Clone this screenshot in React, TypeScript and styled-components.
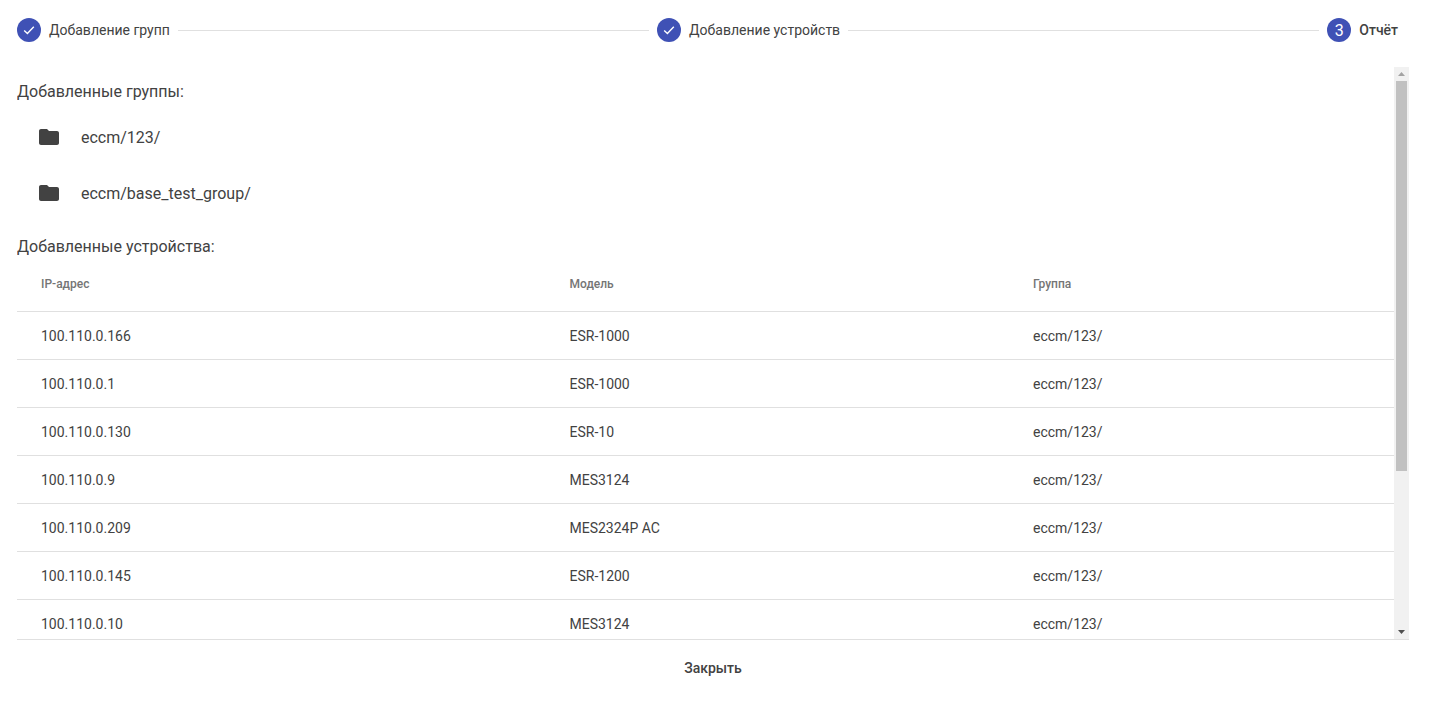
import React from "react";
import styled, { createGlobalStyle } from "styled-components";

const Global = createGlobalStyle`
  html, body { margin: 0; padding: 0; height: 100%; background: #fff; }
  body {
    font-family: Roboto, "Liberation Sans", sans-serif;
    color: #424242;
  }
`;

const Page = styled.div`
  height: 710px;
  display: flex;
  flex-direction: column;
  box-sizing: border-box;
  overflow: hidden;
`;

const Stepper = styled.div`
  display: flex;
  align-items: center;
  height: 60px;
  padding: 0 25px 0 9px;
  flex: none;
`;

const Step = styled.div`
  display: flex;
  align-items: center;
  padding: 0 8px;
  flex: none;
`;

const StepCircle = styled.div`
  width: 24px;
  height: 24px;
  border-radius: 50%;
  background: #3f51b5;
  color: #fff;
  display: flex;
  align-items: center;
  justify-content: center;
  font-size: 16px;
  font-weight: 400;
`;

const StepLabel = styled.span<{ $active?: boolean }>`
  margin-left: 8px;
  font-size: 14px;
  line-height: 20px;
  font-weight: ${(p) => (p.$active ? 500 : 400)};
  color: #424242;
`;

const Connector = styled.div`
  flex: 1;
  height: 1px;
  background: #e0e0e0;
`;

const Body = styled.div`
  flex: none;
  display: flex;
  margin: 7px 22px 0 17px;
  height: 573px;
  border-bottom: 1px solid #e0e0e0;
  box-sizing: border-box;
`;

const ScrollArea = styled.div`
  flex: 1;
  min-width: 0;
  overflow: hidden;
`;

const Scrollbar = styled.div`
  flex: none;
  width: 15px;
  display: flex;
  flex-direction: column;
  background: #f1f1f1;
`;

const ScrollButton = styled.div<{ $end?: boolean }>`
  flex: none;
  height: 14px;
  display: flex;
  align-items: center;
  justify-content: center;
  margin-top: ${(p) => (p.$end ? "auto" : "0")};
`;

const ScrollThumb = styled.div`
  flex: none;
  height: 390px;
  margin: 0 2px;
  background: #c1c1c1;
`;

const SectionTitle = styled.div`
  font-size: 16px;
  line-height: 24px;
  padding-top: 13px;
  color: #424242;
`;

const GroupList = styled.ul`
  list-style: none;
  margin: 5px 0 1px;
  padding: 0;
`;

const GroupItem = styled.li`
  display: flex;
  align-items: center;
  height: 56px;
  padding-left: 20px;
  font-size: 16px;
  color: #424242;
`;

const GroupIcon = styled.svg`
  width: 24px;
  height: 24px;
  fill: #424242;
  margin-right: 20px;
  flex: none;
`;

const DeviceTable = styled.table`
  width: 100%;
  border-collapse: collapse;
  table-layout: fixed;
`;

const HeadCell = styled.th`
  height: 52px;
  padding: 0 0 2px 24px;
  text-align: left;
  font-size: 12px;
  font-weight: 500;
  color: #757575;
  border-bottom: 1px solid #e0e0e0;
  box-sizing: border-box;
`;

const Cell = styled.td`
  height: 48px;
  padding: 2px 0 0 24px;
  font-size: 14px;
  color: #424242;
  border-bottom: 1px solid #e0e0e0;
  box-sizing: border-box;
`;

const Footer = styled.div`
  display: flex;
  justify-content: center;
  padding-right: 5px;
  margin-top: 10px;
`;

const CloseButton = styled.button`
  border: 0;
  background: transparent;
  font-family: inherit;
  font-size: 14px;
  font-weight: 500;
  line-height: 20px;
  color: #424242;
  padding: 8px 16px;
  height: 36px;
`;

const Check = () => (
  <svg width="14" height="14" viewBox="0 0 14 14" fill="none">
    <path d="M2.2 7.4 5.4 10.4 11.8 3.8" stroke="#fff" strokeWidth="1.4" />
  </svg>
);

const rows: [string, string][] = [
  ["100.110.0.166", "ESR-1000"],
  ["100.110.0.1", "ESR-1000"],
  ["100.110.0.130", "ESR-10"],
  ["100.110.0.9", "MES3124"],
  ["100.110.0.209", "MES2324P AC"],
  ["100.110.0.145", "ESR-1200"],
  ["100.110.0.10", "MES3124"],
];

const groups = ["eccm/123/", "eccm/base_test_group/"];

export default function App() {
  return (
    <Page>
      <Global />
      <Stepper>
        <Step>
          <StepCircle><Check /></StepCircle>
          <StepLabel>Добавление групп</StepLabel>
        </Step>
        <Connector />
        <Step>
          <StepCircle><Check /></StepCircle>
          <StepLabel>Добавление устройств</StepLabel>
        </Step>
        <Connector />
        <Step>
          <StepCircle>3</StepCircle>
          <StepLabel $active>Отчёт</StepLabel>
        </Step>
      </Stepper>
      <Body>
        <ScrollArea>
          <SectionTitle>Добавленные группы:</SectionTitle>
          <GroupList>
            {groups.map((g) => (
              <GroupItem key={g}>
                <GroupIcon viewBox="0 0 24 24">
                  <path d="M10 4H4c-1.1 0-1.99.9-1.99 2L2 18c0 1.1.9 2 2 2h16c1.1 0 2-.9 2-2V8c0-1.1-.9-2-2-2h-8l-2-2z" />
                </GroupIcon>
                {g}
              </GroupItem>
            ))}
          </GroupList>
          <SectionTitle>Добавленные устройства:</SectionTitle>
          <DeviceTable>
            <colgroup>
              <col style={{ width: 528.5 }} />
              <col style={{ width: 463.5 }} />
              <col />
            </colgroup>
            <thead>
              <tr>
                <HeadCell>IP-адрес</HeadCell>
                <HeadCell>Модель</HeadCell>
                <HeadCell>Группа</HeadCell>
              </tr>
            </thead>
            <tbody>
              {rows.map(([ip, model]) => (
                <tr key={ip}>
                  <Cell>{ip}</Cell>
                  <Cell>{model}</Cell>
                  <Cell>eccm/123/</Cell>
                </tr>
              ))}
            </tbody>
          </DeviceTable>
        </ScrollArea>
        <Scrollbar>
          <ScrollButton>
            <svg width="7" height="4" viewBox="0 0 7 4"><path d="M3.5 0 7 4H0z" fill="#a3a3a3" /></svg>
          </ScrollButton>
          <ScrollThumb />
          <ScrollButton $end>
            <svg width="7" height="4" viewBox="0 0 7 4"><path d="M0 0h7L3.5 4z" fill="#505050" /></svg>
          </ScrollButton>
        </Scrollbar>
      </Body>
      <Footer>
        <CloseButton>Закрыть</CloseButton>
      </Footer>
    </Page>
  );
}
